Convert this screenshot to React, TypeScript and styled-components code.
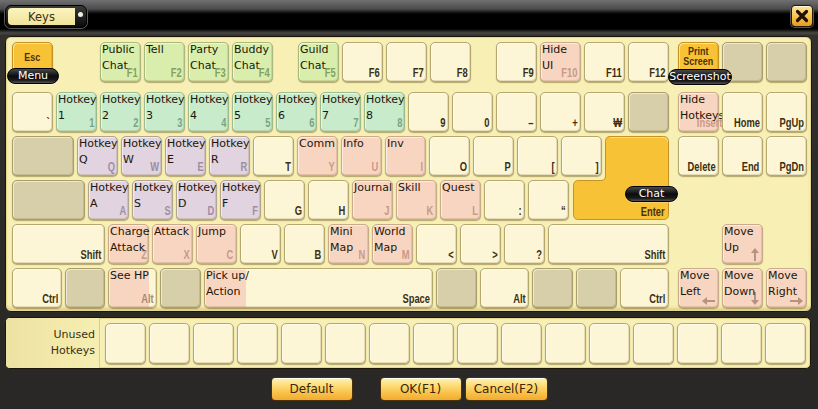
import React from "react";
import styled, { createGlobalStyle } from "styled-components";

const GlobalStyle = createGlobalStyle`
  html, body { margin: 0; padding: 0; background: #2b2926; }
  body { font-family: "DejaVu Sans", "Liberation Sans", sans-serif; }
`;

type Color = "cream" | "grey" | "green" | "mint" | "lav" | "peach" | "orange";
type Dir = "up" | "down" | "left" | "right";
type PillDef = { text: string; x: number; y: number; w: number };
type KeyDef = {
  w?: number;
  t?: string;
  l?: string;
  c?: Color;
  icon?: number;
  dim?: boolean;
  top?: boolean;
  topPad?: number;
  arrow?: Dir;
  pill?: PillDef;
  enter?: boolean;
};
type Item = KeyDef | { s: number };

const palette: Record<Color, { bg: string; border: string; label: string }> = {
  cream: { bg: "#fdf6d6", border: "#b5a770", label: "#3b2f14" },
  grey: { bg: "#d6cfa9", border: "#a99e6c", label: "#3b2f14" },
  green: { bg: "#d9eeac", border: "#a9b87c", label: "#86a060" },
  mint: { bg: "#c8ebcb", border: "#9fba8e", label: "#76a486" },
  lav: { bg: "#e1d3df", border: "#b2a58e", label: "#9e8ea4" },
  peach: { bg: "#f8d5c1", border: "#c8ab8a", label: "#c99a88" },
  orange: { bg: "#f8c236", border: "#c69322", label: "#4d3208" },
};

const LABEL_FONT = `"Liberation Sans", Arial, sans-serif`;

const Window = styled.div`
  width: 818px;
  height: 409px;
  box-sizing: border-box;
  background: linear-gradient(180deg, #34322e 0%, #2c2a27 60%, #2a2826 100%);
  display: flex;
  flex-direction: column;
  overflow: hidden;
`;

const TitleBar = styled.div`
  height: 36px;
  box-sizing: border-box;
  padding: 5px 5px 0 5px;
  display: flex;
  justify-content: space-between;
  align-items: flex-start;
  background: linear-gradient(
    180deg,
    #707070 0px,
    #4b4b4b 9px,
    #1a1a1a 12px,
    #000 14px,
    #000 29px,
    #262626 31px,
    #4a4844 33px,
    #2e2c29 36px
  );
`;

const Tab = styled.div`
  display: flex;
  align-items: stretch;
  height: 23px;
  box-sizing: border-box;
  border: 1px solid #000;
  border-radius: 6px;
  background: linear-gradient(#3a3a3a, #0a0a0a);
  box-shadow: 0 0 0 1px #5a5a5a;
  overflow: hidden;
`;

const TabLabel = styled.div`
  width: 67px;
  margin: 2px 0 2px 2px;
  border-radius: 4px 0 0 4px;
  background: linear-gradient(#fcf4bd, #f0e39c);
  display: flex;
  align-items: center;
  justify-content: center;
  font: 11.5px "DejaVu Sans", sans-serif;
  color: #3b3013;
`;

const TabKnob = styled.div`
  width: 11px;
  display: flex;
  align-items: flex-start;
  justify-content: center;
  padding-top: 6px;
  &::after {
    content: "";
    width: 5px;
    height: 5px;
    border-radius: 50%;
    background: #f4f0e0;
  }
`;

const CloseButton = styled.div`
  width: 22px;
  height: 22px;
  box-sizing: border-box;
  border: 1px solid #2a1a04;
  border-radius: 4px;
  background: linear-gradient(#ffe594 0%, #f8c04a 55%, #e89c22 100%);
  box-shadow: inset 0 1px 0 rgba(255, 255, 255, 0.7), 0 0 0 1px #555;
  display: flex;
  align-items: center;
  justify-content: center;
`;

const KeyboardPanel = styled.div`
  margin: 0 6px 0 5px;
  height: 276px;
  box-sizing: border-box;
  border: 1px solid #1d170a;
  border-radius: 6px;
  background: #f7efb3;
  box-shadow: inset 0 0 0 1px #e6d78f, inset 0 -3px 3px rgba(150, 120, 40, 0.25);
  padding: 5px 0 0 6px;
  display: flex;
  flex-direction: column;
  gap: 4px;
`;

const Row = styled.div<{ $after?: number }>`
  display: flex;
  gap: 3px;
  height: 40px;
  margin-bottom: ${(p) => p.$after ?? 0}px;
`;

const Spacer = styled.div<{ $w: number }>`
  flex: 0 0 ${(p) => p.$w}px;
`;

const KeyBox = styled.div<{
  $w: number;
  $h?: number;
  $bg: string;
  $border: string;
  $icon?: string;
  $iconW?: number;
}>`
  position: relative;
  flex: 0 0 auto;
  width: ${(p) => p.$w}px;
  height: ${(p) => p.$h ?? 40}px;
  box-sizing: border-box;
  border-radius: 5px;
  border: 1px solid ${(p) => p.$border};
  background: ${(p) =>
    p.$icon
      ? `linear-gradient(90deg, ${p.$icon} 0px, ${p.$icon} ${p.$iconW}px, ${p.$bg} ${p.$iconW}px)`
      : p.$bg};
  box-shadow: inset 1px 1px 0 rgba(255, 255, 255, 0.55),
    inset -1px -1px 0 rgba(120, 100, 40, 0.18), 0 1px 1px rgba(80, 60, 10, 0.4);
  display: grid;
  grid-template: 1fr / 1fr;
`;

const EnterHolder = styled.div`
  position: relative;
  flex: 0 0 64px;
  height: 40px;
`;

const EnterShape = styled.svg`
  position: absolute;
  left: -32px;
  top: 0;
  width: 96px;
  height: 84px;
  overflow: visible;
`;

const EnterLabel = styled.div`
  position: absolute;
  right: 4px;
  top: 69px;
  font: bold 12px ${LABEL_FONT};
  color: #4d3208;
  transform: scaleX(0.78);
  transform-origin: right bottom;
`;

const KeyLabel = styled.div<{ $color: string; $top?: boolean; $pad?: number }>`
  grid-area: 1 / 1;
  align-self: ${(p) => (p.$top ? "start" : "end")};
  justify-self: ${(p) => (p.$top ? "center" : "end")};
  text-align: ${(p) => (p.$top ? "center" : "right")};
  padding: ${(p) => (p.$top ? `${p.$pad ?? 3}px 0 0 0` : "0 3px 2px 0")};
  white-space: pre;
  font: bold ${(p) => (p.$top ? "11.5px/10px" : "12px/12px")} ${LABEL_FONT};
  color: ${(p) => p.$color};
  transform: scaleX(0.78);
  transform-origin: ${(p) => (p.$top ? "center top" : "right bottom")};
`;

const ActionText = styled.div`
  grid-area: 1 / 1;
  align-self: start;
  justify-self: start;
  white-space: pre;
  padding-left: 1px;
  margin-top: -1px;
  font: 11px/16px "DejaVu Sans", sans-serif;
  color: #1c170a;
  position: relative;
`;

const ArrowWrap = styled.div`
  grid-area: 1 / 1;
  align-self: end;
  justify-self: end;
  padding: 0 3px 2px 0;
  display: flex;
`;

const Pill = styled.div<{ $x: number; $y: number; $w: number }>`
  position: absolute;
  z-index: 5;
  left: ${(p) => p.$x}px;
  top: ${(p) => p.$y}px;
  width: ${(p) => p.$w}px;
  height: 16px;
  box-sizing: border-box;
  border-radius: 8px;
  border: 1px solid #000;
  background: linear-gradient(180deg, #4a4a4a 0%, #0c0c0c 50%, #1a1a1a 80%, #555 100%);
  box-shadow: 0 1px 0 rgba(255, 255, 255, 0.25);
  color: #fff;
  font: 11px/14px "DejaVu Sans", sans-serif;
  text-align: center;
  white-space: nowrap;
`;

const UnusedPanel = styled.div`
  margin: 5px 7px 0 5px;
  height: 52px;
  box-sizing: border-box;
  border: 1px solid #1d170a;
  border-radius: 5px;
  background: #f7efb3;
  box-shadow: inset 0 0 0 1px #e6d78f;
  display: flex;
  align-items: center;
  overflow: hidden;
`;

const UnusedLabel = styled.div`
  width: 94px;
  align-self: stretch;
  box-sizing: border-box;
  display: flex;
  align-items: center;
  justify-content: flex-end;
  text-align: right;
  padding-right: 4px;
  border-right: 1px solid #d9cb8c;
  background: linear-gradient(90deg, #ede2a2, #f6eeb2);
  font: 11px/16px "DejaVu Sans", sans-serif;
  color: #3a3014;
  white-space: pre;
`;

const UnusedKeys = styled.div`
  display: flex;
  gap: 3px;
  margin-left: 5px;
`;

const ButtonBar = styled.div`
  display: flex;
  justify-content: center;
  padding-top: 8px;
  gap: 3px;
`;

const Button = styled.div<{ $w: number; $gapAfter?: number }>`
  width: ${(p) => p.$w}px;
  height: 24px;
  box-sizing: border-box;
  margin-right: ${(p) => p.$gapAfter ?? 0}px;
  border: 1px solid #4a3209;
  border-radius: 4px;
  background: linear-gradient(180deg, #fff3b8 0%, #fdd86e 40%, #f8c048 70%, #f2ab30 100%);
  box-shadow: inset 0 1px 0 rgba(255, 255, 255, 0.8);
  display: flex;
  align-items: center;
  justify-content: center;
  font: 12px "DejaVu Sans", sans-serif;
  color: #3a2608;
`;

const hot = (n: string, c: Color): KeyDef => ({ t: `Hotkey\n${n}`, l: n, c });

const rows: { items: Item[]; after?: number }[] = [
  {
    after: 6,
    items: [
      { c: "orange", l: "Esc", top: true, topPad: 9, pill: { text: "Menu", x: -6, y: 25, w: 52 } },
      { s: 41 },
      { t: "Public\nChat", l: "F1", c: "green" },
      { t: "Tell", l: "F2", c: "green" },
      { t: "Party\nChat", l: "F3", c: "green" },
      { t: "Buddy\nChat", l: "F4", c: "green" },
      { s: 19 },
      { t: "Guild\nChat", l: "F5", c: "green" },
      { l: "F6" },
      { l: "F7" },
      { l: "F8" },
      { s: 19 },
      { l: "F9" },
      { t: "Hide\nUI", l: "F10", c: "peach" },
      { l: "F11" },
      { l: "F12" },
      { s: 3 },
      {
        c: "orange",
        l: "Print\nScreen",
        top: true,
        topPad: 3,
        pill: { text: "Screenshot", x: -11, y: 26, w: 64 },
      },
      { c: "grey" },
      { c: "grey" },
    ],
  },
  {
    items: [
      { l: "`" },
      hot("1", "mint"),
      hot("2", "mint"),
      hot("3", "mint"),
      hot("4", "mint"),
      hot("5", "mint"),
      hot("6", "mint"),
      hot("7", "mint"),
      hot("8", "mint"),
      { l: "9" },
      { l: "0" },
      { l: "–" },
      { l: "+" },
      { l: "₩" },
      { c: "grey" },
      { s: 3 },
      { t: "Hide\nHotkeys", l: "Insert", c: "peach" },
      { l: "Home" },
      { l: "PgUp" },
    ],
  },
  {
    items: [
      { c: "grey", w: 62 },
      hot("Q", "lav"),
      hot("W", "lav"),
      hot("E", "lav"),
      hot("R", "lav"),
      { l: "T" },
      { t: "Comm", l: "Y", c: "peach" },
      { t: "Info", l: "U", c: "peach" },
      { t: "Inv", l: "I", c: "peach" },
      { l: "O" },
      { l: "P" },
      { l: "[" },
      { l: "]" },
      { enter: true, pill: { text: "Chat", x: 20, y: 50, w: 53 } },
      { s: 3 },
      { l: "Delete" },
      { l: "End" },
      { l: "PgDn" },
    ],
  },
  {
    items: [
      { c: "grey", w: 73 },
      hot("A", "lav"),
      hot("S", "lav"),
      hot("D", "lav"),
      hot("F", "lav"),
      { l: "G" },
      { l: "H" },
      { t: "Journal", l: "J", c: "peach" },
      { t: "Skill", l: "K", c: "peach" },
      { t: "Quest", l: "L", c: "peach" },
      { l: ":" },
      { l: "“" },
    ],
  },
  {
    items: [
      { l: "Shift", w: 93 },
      { t: "Charge\nAttack", l: "Z", c: "peach" },
      { t: "Attack", l: "X", c: "peach" },
      { t: "Jump", l: "C", c: "peach" },
      { l: "V" },
      { l: "B" },
      { t: "Mini\nMap", l: "N", c: "peach" },
      { t: "World\nMap", l: "M", c: "peach" },
      { l: "<" },
      { l: ">" },
      { l: "?" },
      { l: "Shift", w: 121 },
      { s: 47 },
      { t: "Move\nUp", c: "peach", arrow: "up" },
    ],
  },
  {
    items: [
      { l: "Ctrl", w: 50 },
      { c: "grey", w: 40 },
      { t: "See HP", l: "Alt", w: 49, c: "peach", icon: 40, dim: true },
      { c: "grey" },
      { t: "Pick up/\nAction", l: "Space", w: 229, c: "peach", icon: 41 },
      { c: "grey" },
      { l: "Alt", w: 49 },
      { c: "grey" },
      { c: "grey" },
      { l: "Ctrl", w: 49 },
      { s: 3 },
      { t: "Move\nLeft", c: "peach", arrow: "left" },
      { t: "Move\nDown", c: "peach", arrow: "down" },
      { t: "Move\nRight", c: "peach", arrow: "right" },
    ],
  },
];

const ARROW_COLOR = "#b8917f";

function Arrow({ dir }: { dir: Dir }) {
  if (dir === "up" || dir === "down") {
    const d =
      dir === "up"
        ? "M4 0 L8 5 L5 5 L5 13 L3 13 L3 5 L0 5 Z"
        : "M4 13 L8 8 L5 8 L5 0 L3 0 L3 8 L0 8 Z";
    return (
      <svg width="8" height="13" viewBox="0 0 8 13">
        <path d={d} fill={ARROW_COLOR} />
      </svg>
    );
  }
  const d =
    dir === "left"
      ? "M0 4 L5 0 L5 3 L13 3 L13 5 L5 5 L5 8 Z"
      : "M13 4 L8 0 L8 3 L0 3 L0 5 L8 5 L8 8 Z";
  return (
    <svg width="13" height="8" viewBox="0 0 13 8">
      <path d={d} fill={ARROW_COLOR} />
    </svg>
  );
}

function Key({ k }: { k: KeyDef }) {
  const c = k.c ?? "cream";
  const pal = palette[c];
  const bg = k.icon ? palette.cream.bg : pal.bg;
  const labelColor = k.icon && !k.dim ? palette.cream.label : k.dim ? "#a88a76" : pal.label;
  return (
    <KeyBox
      $w={k.w ?? 41}
      $bg={bg}
      $border={k.icon ? palette.cream.border : pal.border}
      $icon={k.icon ? pal.bg : undefined}
      $iconW={k.icon}
    >
      {k.l && (
        <KeyLabel $color={labelColor} $top={k.top} $pad={k.topPad}>
          {k.l}
        </KeyLabel>
      )}
      {k.arrow && (
        <ArrowWrap>
          <Arrow dir={k.arrow} />
        </ArrowWrap>
      )}
      {k.t && <ActionText>{k.t}</ActionText>}
      {k.pill && (
        <Pill $x={k.pill.x} $y={k.pill.y} $w={k.pill.w}>
          {k.pill.text}
        </Pill>
      )}
    </KeyBox>
  );
}

function EnterKey({ pill }: { pill?: PillDef }) {
  const d =
    "M37 0.5 H90.5 Q95.5 0.5 95.5 5.5 V78.5 Q95.5 83.5 90.5 83.5 H5.5 Q0.5 83.5 0.5 78.5 V49.5 Q0.5 44.5 5.5 44.5 H28 Q32.5 44.5 32.5 40 V5.5 Q32.5 0.5 37 0.5 Z";
  return (
    <EnterHolder>
      <EnterShape viewBox="0 0 96 84">
        <path d={d} fill="#f8c236" stroke="#c69322" strokeWidth="1" />
        <path
          d="M37 1.5 H90.5 Q94.5 1.5 94.5 5.5"
          fill="none"
          stroke="rgba(255,255,255,0.45)"
          strokeWidth="1"
        />
      </EnterShape>
      <EnterLabel>Enter</EnterLabel>
      {pill && (
        <Pill $x={pill.x} $y={pill.y} $w={pill.w}>
          {pill.text}
        </Pill>
      )}
    </EnterHolder>
  );
}

export default function App() {
  return (
    <>
      <GlobalStyle />
      <Window>
        <TitleBar>
          <Tab>
            <TabLabel>Keys</TabLabel>
            <TabKnob />
          </Tab>
          <CloseButton>
            <svg width="14" height="14" viewBox="0 0 14 14">
              <path d="M2.5 2.5 L11.5 11.5 M11.5 2.5 L2.5 11.5" stroke="#1d1305" strokeWidth="3.2" strokeLinecap="round" />
            </svg>
          </CloseButton>
        </TitleBar>

        <KeyboardPanel>
          {rows.map((row, ri) => (
            <Row key={ri} $after={row.after}>
              {row.items.map((it, ii) =>
                "s" in it ? (
                  <Spacer key={ii} $w={it.s} />
                ) : it.enter ? (
                  <EnterKey key={ii} pill={it.pill} />
                ) : (
                  <Key key={ii} k={it} />
                )
              )}
            </Row>
          ))}
        </KeyboardPanel>

        <UnusedPanel>
          <UnusedLabel>{"Unused\nHotkeys"}</UnusedLabel>
          <UnusedKeys>
            {Array.from({ length: 16 }).map((_, i) => (
              <KeyBox key={i} $w={41} $h={41} $bg={palette.cream.bg} $border={palette.cream.border} />
            ))}
          </UnusedKeys>
        </UnusedPanel>

        <ButtonBar>
          <Button $w={82} $gapAfter={24}>
            Default
          </Button>
          <Button $w={82}>OK(F1)</Button>
          <Button $w={83}>Cancel(F2)</Button>
        </ButtonBar>
      </Window>
    </>
  );
}
